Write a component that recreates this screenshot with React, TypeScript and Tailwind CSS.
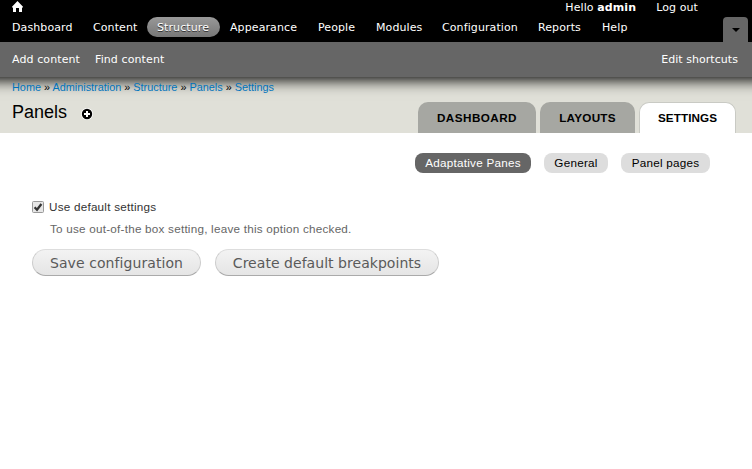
const menu = [
  { label: "Dashboard", className: "w-[81px]" },
  { label: "Content", className: "w-16" },
  { label: "Structure", className: "w-[73px] bg-linear-to-b from-[#999] to-[#777] [text-shadow:#333_0_1px_0]" },
  { label: "Appearance", className: "w-[88px]" },
  { label: "People", className: "w-[58px]" },
  { label: "Modules", className: "w-[66px]" },
  { label: "Configuration", className: "w-24" },
  { label: "Reports", className: "w-16" },
  { label: "Help", className: "w-[46px]" },
];
const crumbs = ["Home", "Administration", "Structure", "Panels", "Settings"];

function HomeIcon() {
  return (
    <svg className="block h-[11px] w-[11px]" viewBox="0 0 11 11" fill="#fff">
      <path d="M5.5 0L11 5.7V6.4H10V11H7V7H4V11H1V6.4H0V5.7Z" />
    </svg>
  );
}

function AddIcon() {
  return (
    <svg className="block h-3 w-3" viewBox="0 0 12 12">
      <circle cx="6" cy="6" r="6" fill="#fff" />
      <circle cx="6" cy="6" r="5.2" fill="#000" />
      <path d="M5 3h2v2h2v2H7v2H5V7H3V5h2z" fill="#fff" />
    </svg>
  );
}

function Toolbar() {
  return (
    <header className="relative z-10 -mx-5 h-[77px] bg-[#666] px-5 font-['DejaVu_Sans',sans-serif] text-[11px] tracking-[0.1px] text-white shadow-[0_3px_14px_#000]">
      <div className="-mx-5 h-[42px] bg-black px-5">
        <div className="flex h-[17px] items-start justify-between pl-3 pr-[54px]">
          <div className="pt-px"><HomeIcon /></div>
          <div className="flex gap-5 leading-4">
            <span>Hello <b>admin</b></span>
            <span>Log out</span>
          </div>
        </div>
        <div className="flex justify-between pl-0.5 pr-1">
          <nav className="flex">
            {menu.map((m) => (
              <a key={m.label} className={"h-5 whitespace-nowrap rounded-[10px] pl-2.5 leading-[21px] " + m.className}>
                {m.label}
              </a>
            ))}
          </nav>
          <button className="flex h-[25px] w-[25px] items-center justify-center rounded-t-[4px] bg-[#666]">
            <svg className="block h-1 w-2" viewBox="0 0 8 4"><path d="M0 0h8L4 4z" fill="#000" /></svg>
          </button>
        </div>
      </div>
      <div className="flex h-[35px] justify-between pl-3 pr-3.5 leading-[35px]">
        <div className="flex gap-[15px]">
          <a>Add content</a>
          <a>Find content</a>
        </div>
        <a className="tracking-[0.05px]">Edit shortcuts</a>
      </div>
    </header>
  );
}

function Tab({ label, className }: { label: string; className: string }) {
  return (
    <a className={"h-[31px] rounded-t-[10px] text-center text-[11.7px] font-bold " + className}>
      {label}
    </a>
  );
}

const button =
  "h-[27px] whitespace-nowrap rounded-full border border-[#ccc] border-b-[#aaa] border-t-[#ddd] bg-linear-to-b from-[#f3f3f3] to-[#e5e5e5] font-['DejaVu_Sans',sans-serif] text-[14px] leading-[26px] text-[#5a5a5a] ";

export default function App() {
  return (
    <div className="h-[469px] w-[752px] overflow-hidden bg-white font-['Liberation_Sans',Arial,sans-serif] text-black">
      <Toolbar />
      <div className="flex h-14 justify-between bg-[#e0e0d8] pl-3 pr-4">
        <div>
          <div className="relative z-20 pt-[3px] text-[10.87px] leading-[15px]">
            {crumbs.map((c, i) => (
              <span key={c}>
                {i > 0 && " » "}
                <a className="text-[#0074bd]">{c}</a>
              </span>
            ))}
          </div>
          <div className="flex pt-1">
            <h1 className="w-[69px] text-[18px] leading-[26px]">Panels</h1>
            <div className="pt-[9px]"><AddIcon /></div>
          </div>
        </div>
        <nav className="flex items-end gap-1">
          <Tab label="DASHBOARD" className="w-[118px] bg-[#a6a7a2] leading-8 tracking-[0.45px]" />
          <Tab label="LAYOUTS" className="w-[95px] bg-[#a6a7a2] leading-8 tracking-[0.25px]" />
          <Tab label="SETTINGS" className="w-[97px] border border-b-0 border-[#c9cac4] bg-white leading-[30px] tracking-[0.1px]" />
        </nav>
      </div>
      <nav className="flex justify-end gap-[13px] pr-[42px] pt-5 text-[11.7px] leading-5 tracking-[0.25px]">
        <a className="h-5 w-[116px] rounded-lg bg-[#666] text-center text-white">Adaptative Panes</a>
        <a className="h-5 w-16 rounded-lg bg-[#ddd] text-center">General</a>
        <a className="h-5 w-[89px] rounded-lg bg-[#ddd] text-center">Panel pages</a>
      </nav>
      <main className="px-8 pt-[26px] tracking-[0.23px]">
        <label className="flex h-4 items-center gap-[5px] text-[11.7px] text-[#333]">
          <svg className="block h-3 w-3" viewBox="0 0 12 12">
            <rect x=".5" y=".5" width="11" height="11" rx="1" fill="#e6e6e6" stroke="#999" />
            <path d="M2.6 6.2L5 8.7L9.4 3" fill="none" stroke="#333" strokeWidth="2.3" />
          </svg>
          Use default settings
        </label>
        <p className="pl-[18px] pt-1.5 text-[11.7px] leading-4 text-[#666]">
          To use out-of-the box setting, leave this option checked.
        </p>
        <div className="flex gap-3.5 pt-3">
          <button className={button + "w-[169px] tracking-[0.08px]"}>Save configuration</button>
          <button className={button + "w-[224px] tracking-[0.04px]"}>Create default breakpoints</button>
        </div>
      </main>
    </div>
  );
}
